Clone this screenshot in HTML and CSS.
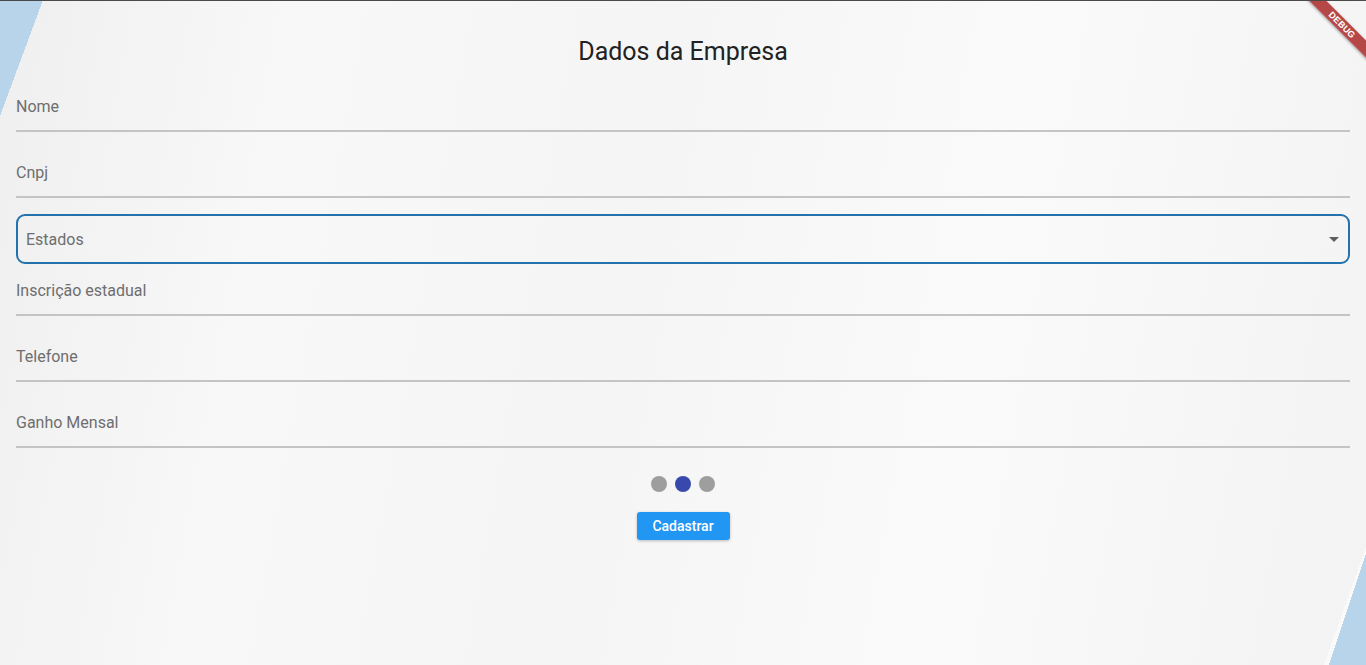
FILE: index.html
```html
<!DOCTYPE html>
<html lang="pt-BR">
<head>
<meta charset="utf-8">
<title>Dados da Empresa</title>
<link rel="stylesheet" href="styles.css">
</head>
<body>
<div class="topline"></div>
<div class="banner"><span>DEBUG</span></div>
<main class="page">
  <h1 class="title">Dados da Empresa</h1>
  <form class="form">
    <div class="field"><span class="label">Nome</span></div>
    <div class="field gap"><span class="label">Cnpj</span></div>
    <div class="dropdown">
      <span class="label">Estados</span>
      <span class="arrow"></span>
    </div>
    <div class="field"><span class="label">Inscrição estadual</span></div>
    <div class="field gap"><span class="label">Telefone</span></div>
    <div class="field gap"><span class="label">Ganho Mensal</span></div>
    <div class="dots">
      <span class="dot"></span>
      <span class="dot active"></span>
      <span class="dot"></span>
    </div>
    <div class="actions">
      <button type="button" class="btn">Cadastrar</button>
    </div>
  </form>
</main>
</body>
</html>
```

FILE: styles.css
```css
html, body {
  margin: 0;
  padding: 0;
  height: 100%;
}

body {
  position: relative;
  overflow: hidden;
  font-family: Roboto, "Noto Sans", "Liberation Sans", sans-serif;
  background-color: #f4f4f4;
  background-image:
    linear-gradient(to bottom right, #b8d4ea 50%, transparent 50%),
    linear-gradient(to bottom right, transparent 50%, #b8d4ea 50%),
    linear-gradient(to bottom right, transparent 50%, rgba(255,255,255,0.55) 50%),
    linear-gradient(100deg, #efefef 0%, #f8f8f8 20%, #f5f5f5 45%, #fafafa 70%, #f3f3f3 100%);
  background-size: 43px 116px, 37px 112px, 42px 118px, 100% 100%;
  background-position: left top, right bottom, right bottom, 0 0;
  background-repeat: no-repeat;
}

.topline {
  position: absolute;
  left: 0;
  top: 0;
  right: 0;
  height: 1px;
  background: #4a4a4a;
  z-index: 3;
}

.banner {
  position: absolute;
  top: 19px;
  right: -36px;
  width: 120px;
  height: 12px;
  background: rgba(170, 40, 40, 0.85);
  transform: rotate(45deg);
  box-shadow: 0 1px 3px rgba(0,0,0,0.35);
  display: flex;
  align-items: center;
  justify-content: center;
  z-index: 2;
}

.banner span {
  color: #ffffff;
  font-family: "Liberation Sans", Arial, sans-serif;
  font-weight: 700;
  font-size: 9px;
  line-height: 1;
  letter-spacing: 0.2px;
}

.page {
  padding: 0 16px;
}

.title {
  margin: 0;
  padding-top: 36px;
  font-size: 25px;
  line-height: 31px;
  font-weight: 400;
  color: #222222;
  text-align: center;
}

.form {
  margin-top: 13px;
  display: flex;
  flex-direction: column;
}

.field {
  height: 52px;
  box-sizing: border-box;
  padding-top: 17px;
  border-bottom: 2px solid #c4c4c4;
}

.field.gap {
  margin-top: 14px;
}

.label {
  display: block;
  font-size: 16px;
  line-height: 20px;
  color: #6e6e6e;
}

.dropdown {
  margin-top: 16px;
  height: 50px;
  box-sizing: border-box;
  border: 2px solid #2272ad;
  border-radius: 9px;
  padding: 1px 8px 0 8px;
  display: flex;
  align-items: center;
  justify-content: space-between;
}

.arrow {
  width: 0;
  height: 0;
  border-left: 5px solid transparent;
  border-right: 5px solid transparent;
  border-top: 5px solid #5f5f5f;
  margin-right: 1px;
}

.dots {
  margin-top: 28px;
  display: flex;
  justify-content: center;
  gap: 8px;
}

.dot {
  width: 16px;
  height: 16px;
  border-radius: 50%;
  background: #9e9e9e;
}

.dot.active {
  background: #3949ab;
}

.actions {
  margin-top: 20px;
  display: flex;
  justify-content: center;
}

.btn {
  width: 93px;
  height: 28px;
  border: none;
  border-radius: 3px;
  background: #2196f3;
  color: #ffffff;
  font-family: Roboto, "Liberation Sans", sans-serif;
  font-size: 14px;
  font-weight: 500;
  padding: 0;
  box-shadow: 0 1px 3px rgba(0,0,0,0.25);
  cursor: pointer;
}
```
